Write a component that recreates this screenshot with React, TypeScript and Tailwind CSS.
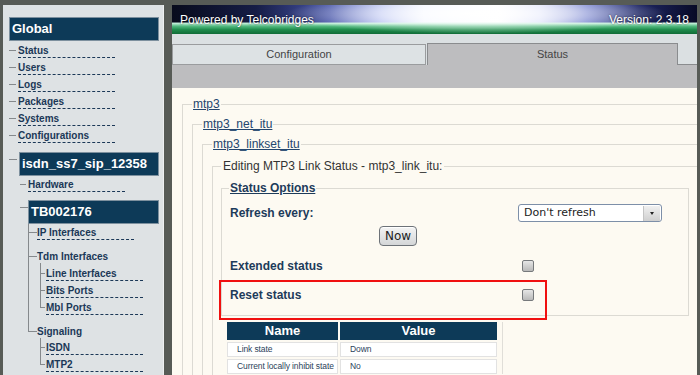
import type { ReactNode } from "react"

const SANS = "font-['Liberation_Sans',Arial,sans-serif]"

function Branch({
  h = "h-[7px]",
  pt = "",
  w = "w-[9px]",
  mr = "",
  line = false,
  last = false,
  children,
}: {
  h?: string
  pt?: string
  w?: string
  mr?: string
  line?: boolean
  last?: boolean
  children: ReactNode
}) {
  return (
    <div className="flex">
      <div className={`${w} shrink-0 flex flex-col`}>
        <div className={`${h} ${mr} border-b border-[#85898c] ${line ? "border-l" : ""}`} />
        {line && !last && <div className="flex-1 border-l border-[#85898c]" />}
      </div>
      <div className={`flex-1 min-w-0 ${pt}`}>{children}</div>
    </div>
  )
}

function Item({ label }: { label: string }) {
  return (
    <div>
      <div className="text-[10px] leading-[13px] font-bold text-[#1b3857] whitespace-nowrap">{label}</div>
      <div className="w-[97px] border-b border-dashed border-[#1b3857] mb-[3px]" />
    </div>
  )
}

function Label({ label }: { label: string }) {
  return <div className="text-[10px] leading-[13px] font-bold text-[#1b3857] whitespace-nowrap">{label}</div>
}

function HeadBox({ label, className = "" }: { label: string; className?: string }) {
  return (
    <div className={`h-[24px] bg-[#0d3a58] border border-[#7d909e] text-white font-bold text-[13px] leading-[22px] pl-[2px] whitespace-nowrap overflow-hidden ${className}`}>
      {label}
    </div>
  )
}

function Sidebar() {
  return (
    <aside className="w-[161px] shrink-0 bg-[#dee2e4] border-r border-[#eef0f1] pt-[12px] pl-[6px] pr-[4px] overflow-hidden">
      <HeadBox label="Global" className="mb-[3px]" />
      {["Status", "Users", "Logs", "Packages", "Systems", "Configurations"].map(l => (
        <Branch key={l} mr="mr-[2px]">
          <Item label={l} />
        </Branch>
      ))}
      <Branch h="h-[14px]" pt="pt-[6px]" mr="mr-[1px]">
        <HeadBox label="isdn_ss7_sip_12358" className="ml-[1px]" />
        <div className="pl-[2px]">
          <Branch w="w-[8px]" h="h-[9px]" pt="pt-[2px]" mr="mr-[2px]">
            <Item label="Hardware" />
          </Branch>
          <Branch w="w-[8px]" h="h-[13px]" pt="pt-[5px]">
            <HeadBox label="TB002176" />
            <div>
              <Branch line h="h-[9px]" pt="pt-[2px]">
                <Item label="IP Interfaces" />
              </Branch>
              <Branch line h="h-[14px]" pt="pt-[7px]">
                <Label label="Tdm Interfaces" />
                <div className="pl-[3px]">
                  <Branch line w="w-[6px]" h="h-[11px]" pt="pt-[4px]" mr="mr-[1px]">
                    <Item label="Line Interfaces" />
                  </Branch>
                  <Branch line w="w-[6px]" mr="mr-[1px]">
                    <Item label="Bits Ports" />
                  </Branch>
                  <Branch line last w="w-[6px]" mr="mr-[1px]">
                    <Item label="Mbl Ports" />
                  </Branch>
                </div>
              </Branch>
              <Branch line last h="h-[14px]" pt="pt-[7px]">
                <Label label="Signaling" />
                <div className="pl-[3px]">
                  <Branch line w="w-[6px]" h="h-[10px]" pt="pt-[3px]" mr="mr-[1px]">
                    <Item label="ISDN" />
                  </Branch>
                  <Branch line last w="w-[6px]" mr="mr-[1px]">
                    <Item label="MTP2" />
                  </Branch>
                </div>
              </Branch>
            </div>
          </Branch>
        </div>
      </Branch>
    </aside>
  )
}

function Checkbox() {
  return <div className="w-[12px] h-[12px] rounded-[2px] border border-[#76797c] bg-gradient-to-b from-[#e6e6e6] to-[#b9b9b9]" />
}

function Link({ children }: { children: ReactNode }) {
  return <span className="text-[#23466e] underline">{children}</span>
}

function Row({ name, value }: { name: string; value: string }) {
  return (
    <tr>
      <td className="p-0 pt-[2px] border-r-2 border-[#fdfaf2]">
        <div className="bg-white border border-[#e2e2e2] h-[15px] leading-[13px] pl-[9px] whitespace-nowrap">{name}</div>
      </td>
      <td className="p-0 pt-[2px]">
        <div className="bg-white border border-[#e2e2e2] h-[15px] leading-[13px] pl-[9px]">{value}</div>
      </td>
    </tr>
  )
}

export default function App() {
  return (
    <div className={`w-[700px] h-[375px] overflow-hidden bg-[#575b56] flex gap-[8px] pt-[5px] pl-[3px] ${SANS}`}>
      <Sidebar />
      <main className="w-[525px] shrink-0 flex flex-col overflow-hidden bg-[#fdfaf2]">
        <div className="h-[29px] shrink-0 flex items-start justify-between px-[8px] pt-[8px] text-[12px] leading-[14px] text-white [text-shadow:0_0_2px_rgba(0,0,0,0.7)] bg-[radial-gradient(ellipse_190px_20px_at_58%_30%,rgba(255,255,255,1),rgba(255,255,255,0.6)_50%,rgba(255,255,255,0)_100%),linear-gradient(to_bottom,rgba(0,0,0,0)_0%,rgba(0,0,0,0)_58%,#c4f0da_63%,#52ba80_73%,#1f8c4c_85%,#106c37_100%),linear-gradient(to_right,#080b1c_0%,#161d46_16%,#4654a8_30%,#aab6f0_40%,#eef2ff_48%,#ffffff_62%,#d0d6f8_70%,#6472c8_79%,#1e2664_89%,#080a26_100%)]">
          <span>Powered by Telcobridges</span>
          <span>Version: 2.3.18</span>
        </div>
        <div className="h-[31px] shrink-0 bg-[#dbe0e2] flex items-end text-[11px] text-[#444]">
          <div className="w-[254px] h-[21px] border border-[#9a9c9e] bg-[#dde2e4] text-center leading-[19px]">Configuration</div>
          <div className="w-[251px] h-[22px] ml-[1px] border border-b-0 border-[#8a8c8e] bg-[#bdbdbf] text-center leading-[21px]">Status</div>
          <div className="flex-1 h-[1px] bg-[#8a8c8e]" />
        </div>
        <div className="h-[23px] shrink-0 bg-[#bdbdbf]" />
        <div className="flex-1 pl-[10px] pt-[9px] text-[12px] leading-[14px]">
          <fieldset className="border border-[#dcdad3] pl-[9px] pt-[6px] w-[580px]">
            <legend className="px-[1px]"><Link>mtp3</Link></legend>
            <fieldset className="border border-[#dcdad3] pl-[9px] pt-[6px]">
              <legend className="px-[1px]"><Link>mtp3_net_itu</Link></legend>
              <fieldset className="border border-[#dcdad3] pl-[9px] pt-[8px]">
                <legend className="px-[1px]"><Link>mtp3_linkset_itu</Link></legend>
                <fieldset className="border border-[#dcdad3] pl-[8px] pt-[8px] pb-[40px]">
                  <legend className="px-[2px] text-[#333]">Editing MTP3 Link Status - mtp3_link_itu:</legend>
                  <fieldset className="w-[468px] border border-[#dcdad3] pl-[7px] pt-[8px] pb-[12px]">
                    <legend className="px-[1px] font-bold text-[#1d3b5a] underline">Status Options</legend>
                    <div className="ml-[1px] font-bold text-[#1d3b5a]">
                      <div className="grid grid-cols-[288px_1fr] items-center h-[20px]">
                        <span>Refresh every:</span>
                        <div className="w-[144px] h-[18px] rounded-[3px] border border-[#7d8fa8] bg-white flex items-center justify-between pl-[5px] pr-[1px] font-normal text-[#222] font-['DejaVu_Sans',sans-serif] text-[11px]">
                          <span>Don't refresh</span>
                          <div className="w-[17px] h-[15px] bg-gradient-to-b from-[#f0f0f0] to-[#cfcfcf] border-l border-[#c4c4c4] flex items-center justify-center">
                            <div className="w-0 h-0 border-l-[2px] border-r-[2px] border-t-[3px] border-l-transparent border-r-transparent border-t-[#222]" />
                          </div>
                        </div>
                      </div>
                      <div className="mt-[3px] h-[20px] pl-[149px]">
                        <button className="w-[38px] h-[20px] rounded-[4px] border border-[#6d7278] bg-gradient-to-b from-[#f4f4f4] to-[#d4d6d8] font-normal text-[12px] text-[#222] font-['DejaVu_Sans',sans-serif] leading-[18px] shadow-[inset_0_1px_0_#fff]">Now</button>
                      </div>
                      <div className="mt-[12px] grid grid-cols-[292px_1fr] items-center h-[16px]">
                        <span>Extended status</span>
                        <Checkbox />
                      </div>
                      <div className="relative mt-[13px] grid grid-cols-[292px_1fr] items-center h-[16px]">
                        <span>Reset status</span>
                        <Checkbox />
                        <div className="absolute -top-[7px] -left-[11px] w-[328px] h-[40px] border-2 border-[#f01010]" />
                      </div>
                    </div>
                  </fieldset>
                  <div className="mt-[6px] ml-[6px] w-[276px] border-r border-[#e0ded8]">
                    <table className="w-[270px] table-fixed border-separate border-spacing-0 text-[8.5px] tracking-[-0.1px]">
                      <colgroup>
                        <col className="w-[113px]" />
                        <col />
                      </colgroup>
                      <thead>
                        <tr className="bg-[#0d3a58] text-white text-[13px] font-bold tracking-normal">
                          <th className="h-[18px] p-0 leading-[18px] border-r-2 border-[#fdfaf2]">Name</th>
                          <th className="h-[18px] p-0 leading-[18px]">Value</th>
                        </tr>
                      </thead>
                      <tbody className="text-[#2b3f5a]">
                        <Row name="Link state" value="Down" />
                        <Row name="Current locally inhibit state" value="No" />
                      </tbody>
                    </table>
                  </div>
                </fieldset>
              </fieldset>
            </fieldset>
          </fieldset>
        </div>
      </main>
    </div>
  )
}
